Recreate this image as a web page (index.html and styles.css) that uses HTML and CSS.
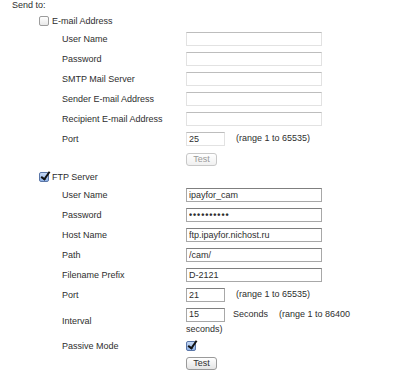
FILE: index.html
```html
<!DOCTYPE html>
<html lang="en">
<head>
    <meta charset="UTF-8">
    <title>Send to</title>
    <link rel="stylesheet" href="styles.css">
</head>
<body>
    <p class="send">Send to:</p>

    <div class="group">
        <label class="group-head"><input type="checkbox" class="check"><span>E-mail Address</span></label>
        <table class="fields">
            <tr><td class="name">User Name</td><td class="val"><input type="text" class="text" disabled></td></tr>
            <tr><td class="name">Password</td><td class="val"><input type="password" class="text" disabled></td></tr>
            <tr><td class="name">SMTP Mail Server</td><td class="val"><input type="text" class="text" disabled></td></tr>
            <tr><td class="name">Sender E-mail Address</td><td class="val"><input type="text" class="text" disabled></td></tr>
            <tr><td class="name">Recipient E-mail Address</td><td class="val"><input type="text" class="text" disabled></td></tr>
            <tr><td class="name">Port</td><td class="val"><input type="text" class="text short" value="25" disabled><span class="gap"></span>(range 1 to 65535)</td></tr>
            <tr><td></td><td class="val"><button type="button" class="btn" disabled>Test</button></td></tr>
        </table>
    </div>

    <div class="group">
        <label class="group-head"><input type="checkbox" class="check" checked><span>FTP Server</span></label>
        <table class="fields">
            <tr><td class="name">User Name</td><td class="val"><input type="text" class="text on" value="ipayfor_cam"></td></tr>
            <tr><td class="name">Password</td><td class="val"><input type="text" class="text on dots" value="&#8226;&#8226;&#8226;&#8226;&#8226;&#8226;&#8226;&#8226;&#8226;&#8226;"></td></tr>
            <tr><td class="name">Host Name</td><td class="val"><input type="text" class="text on" value="ftp.ipayfor.nichost.ru"></td></tr>
            <tr><td class="name">Path</td><td class="val"><input type="text" class="text on" value="/cam/"></td></tr>
            <tr><td class="name">Filename Prefix</td><td class="val"><input type="text" class="text on" value="D-2121"></td></tr>
            <tr><td class="name">Port</td><td class="val"><input type="text" class="text short on" value="21"><span class="gap"></span>(range 1 to 65535)</td></tr>
            <tr><td class="name">Interval</td><td class="val wrap"><input type="text" class="text short on" value="15"><span class="gap small"></span><span>Seconds</span><span class="gap"></span><span>(range 1 to 86400</span><br><span>seconds)</span></td></tr>
            <tr class="short-row"><td class="name">Passive Mode</td><td class="val"><input type="checkbox" class="check" checked></td></tr>
            <tr class="last-row"><td></td><td class="val"><button type="button" class="btn">Test</button></td></tr>
        </table>
    </div>
</body>
</html>
```

FILE: styles.css
```css
body { margin: 0; padding: 0 0 0 12px; font-family: "Liberation Sans", Arial, sans-serif; font-size: 9px; color: #2e2e2e; background: #fff; }
.send { margin: 0; height: 13px; line-height: 11px; }
.group-head { display: flex; align-items: center; gap: 3px; height: 16px; margin-left: 27px; }
.fields { border-collapse: collapse; margin-left: 50px; }
.fields td { padding: 0; height: 20px; vertical-align: middle; }
.fields .name { width: 124px; }
.fields .val { width: 172px; }
.fields .wrap { height: 30px; line-height: 15px; padding: 2px 0 0; }
.fields .short-row td { height: 18px; }
.fields .last-row td { height: 16px; }
.text { box-sizing: border-box; width: 136px; height: 14px; margin: 0; padding: 0 2px; border: 1px solid #e2e2e2; border-top-color: #bdbdbd; font: inherit; color: #2e2e2e; background: #fff; vertical-align: middle; outline: none; }
.text.on { border-color: #a8a8a8; border-top-color: #7f7f7f; }
.text.short { width: 39px; }
.text.dots { font-weight: bold; letter-spacing: 0.9px; }
.gap { display: inline-block; width: 11px; }
.gap.small { width: 8px; }
.btn { box-sizing: border-box; width: 31px; height: 13px; margin: 0; padding: 0; font: inherit; color: #2e2e2e; border: 1px solid #9a9a9a; border-radius: 3px; background: linear-gradient(#fff, #e4e4e4); vertical-align: middle; }
.btn:disabled { color: #999; border-color: #c8c8c8; background: linear-gradient(#fff, #f0f0f0); }
.check { appearance: none; -webkit-appearance: none; position: relative; box-sizing: border-box; width: 10px; height: 10px; margin: 0; border: 1px solid #9c9c9c; border-radius: 2px; background: linear-gradient(#fff, #e8e8e8); vertical-align: middle; }
.check:checked { background: linear-gradient(#c6d9f5, #8fb2e6); border-color: #5a76a8; }
.check:checked::after { content: ""; position: absolute; left: 3px; top: -3px; width: 3px; height: 8px; border: solid #111; border-width: 0 2px 2px 0; transform: rotate(35deg); }
```
